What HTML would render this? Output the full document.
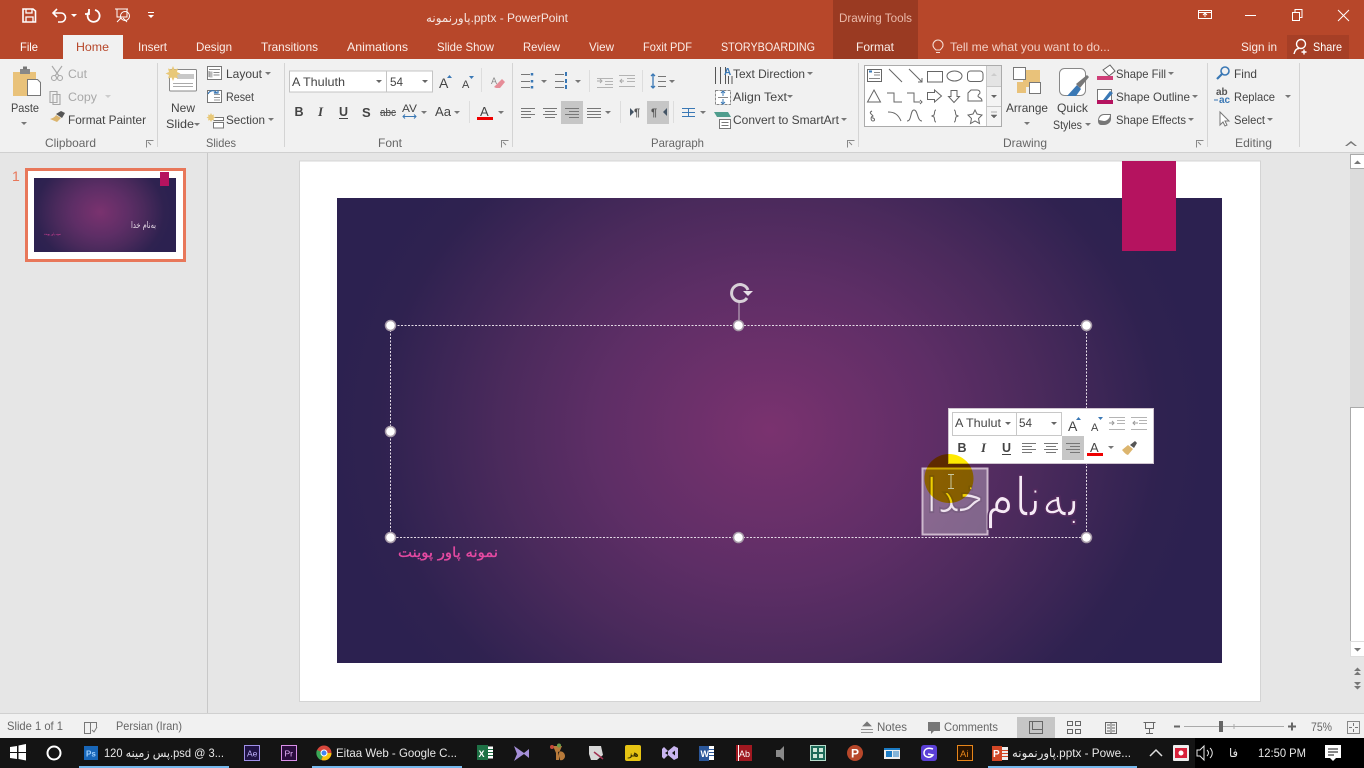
<!DOCTYPE html>
<html><head><meta charset="utf-8"><title>PowerPoint</title>
<style>
html,body{margin:0;padding:0;width:1364px;height:768px;overflow:hidden;background:#e6e6e6}
svg{display:block}
text{font-family:"Liberation Sans","DejaVu Sans",sans-serif;font-size:12px;fill:#444}
.w text,text.w{fill:#fff}
.d{fill:#a8a8a8}
.g{fill:#666}
.tb text{fill:#e8e8e8;font-size:12px}
.l{fill:none;stroke:#666;stroke-width:1}
.c{fill:#777}
</style></head><body>
<svg width="1364" height="768" viewBox="0 0 1364 768" xmlns="http://www.w3.org/2000/svg" lengthAdjust="spacingAndGlyphs">
<defs>
<radialGradient id="bg" gradientUnits="userSpaceOnUse" cx="0" cy="0" r="1" gradientTransform="translate(770 430) scale(440 380)">
<stop offset="0" stop-color="#7a326f"/><stop offset=".39" stop-color="#5e2e66"/><stop offset=".61" stop-color="#4b2a5c"/><stop offset=".89" stop-color="#2f2250"/><stop offset="1" stop-color="#2c2150"/></radialGradient>
<radialGradient id="bg2" gradientUnits="userSpaceOnUse" cx="0" cy="0" r="1" gradientTransform="translate(100 212) scale(72 62)">
<stop offset="0" stop-color="#7a326f"/><stop offset=".39" stop-color="#5e2e66"/><stop offset=".61" stop-color="#4b2a5c"/><stop offset=".89" stop-color="#2f2250"/><stop offset="1" stop-color="#2c2150"/></radialGradient>
<path id="car" d="M0 0h6l-3 3z"/>
</defs>

<!-- title bar -->
<rect width="1364" height="59" fill="#b7472a"/>
<rect x="833" width="85" height="59" fill="#9a3a22"/>
<rect x="63" y="35" width="60" height="24" fill="#f1f1f1"/>
<rect x="1287" y="35" width="62" height="24" fill="#a63f26"/>
<!-- QAT -->
<g fill="none" stroke="#fff" stroke-width="1.6">
<path d="M23 9h10l2.500 2v11H23z"/><path d="M26 9v4h6V9M26 22v-5h7v5" stroke-width="1.3"/>
<path d="M53 13h8a4.500 4.500 0 0 1 0 9h-3M57 9l-4 4 4 4"/>
<path d="M95 10a6 6 0 1 1-6 2M89 9v5h-4" stroke-width="1.800"/>
<path d="M115 9h13M117 9v8h10V9M121 18l-4 4M123 18l4 4" stroke-width="1"/><circle cx="125" cy="16" r="4.500" stroke-width="1"/>
</g>
<path d="M71 14h6l-3 3zM148 15h6l-3 3z" fill="#fff"/><rect x="148" y="12" width="6" height="1" fill="#fff"/>
<text x="426" y="22" class="w" textLength="142" lengthAdjust="spacingAndGlyphs" style="fill:#f5e5e0;font-family:'Liberation Sans','DejaVu Sans',sans-serif">پاورنمونه.pptx - PowerPoint</text>
<text x="839" y="22" textLength="73" lengthAdjust="spacingAndGlyphs" style="fill:#eab9a9;font-size:11.500px">Drawing Tools</text>
<!-- window controls -->
<g fill="none" stroke="#fff" stroke-width="1">
<path d="M1198.500 10.500h13v8h-13zM1198.500 12.500h13M1205 17v-3.500M1203 15l2-2 2 2"/>
<path d="M1245 15.500h11"/>
<path d="M1292.500 12.500h7v8h-7zM1295 12v-2.500h7v8h-2"/>
<path d="M1338 10l11 11M1349 10l-11 11"/>
</g>
<!-- tabs -->
<g style="fill:#fff">
<text x="20" y="51" textLength="18" lengthAdjust="spacingAndGlyphs" style="fill:#fff">File</text>
<text x="76" y="51" textLength="33" lengthAdjust="spacingAndGlyphs" style="fill:#b7472a">Home</text>
<text x="138" y="51" textLength="29" lengthAdjust="spacingAndGlyphs" style="fill:#fbeee9">Insert</text>
<text x="196" y="51" textLength="36" lengthAdjust="spacingAndGlyphs" style="fill:#fbeee9">Design</text>
<text x="261" y="51" textLength="57" lengthAdjust="spacingAndGlyphs" style="fill:#fbeee9">Transitions</text>
<text x="347" y="51" textLength="61" lengthAdjust="spacingAndGlyphs" style="fill:#fbeee9">Animations</text>
<text x="437" y="51" textLength="57" lengthAdjust="spacingAndGlyphs" style="fill:#fbeee9">Slide Show</text>
<text x="523" y="51" textLength="37" lengthAdjust="spacingAndGlyphs" style="fill:#fbeee9">Review</text>
<text x="589" y="51" textLength="25" lengthAdjust="spacingAndGlyphs" style="fill:#fbeee9">View</text>
<text x="643" y="51" textLength="49" lengthAdjust="spacingAndGlyphs" style="fill:#fbeee9">Foxit PDF</text>
<text x="721" y="51" textLength="94" lengthAdjust="spacingAndGlyphs" style="fill:#fbeee9">STORYBOARDING</text>
<text x="856" y="51" textLength="38" lengthAdjust="spacingAndGlyphs" style="fill:#fbeee9">Format</text>
<text x="950" y="51" textLength="160" lengthAdjust="spacingAndGlyphs" style="fill:#f2cfc4">Tell me what you want to do...</text>
<text x="1241" y="51" textLength="36" lengthAdjust="spacingAndGlyphs" style="fill:#fbeee9">Sign in</text>
<text x="1313" y="51" textLength="29" lengthAdjust="spacingAndGlyphs" style="fill:#fff">Share</text>
</g>
<g fill="none" stroke="#f6ddd4" stroke-width="1.100">
<path d="M936 50c-2-2-3-3-3-5a5 5 0 0 1 10 0c0 2-1 3-3 5zM936 52.500h4"/>
</g>
<g fill="none" stroke="#fff" stroke-width="1.400"><circle cx="1301" cy="44" r="4.500"/><path d="M1294 54c1-4 3-5.500 5-5.500M1304 49.500v5M1301.500 52h5"/></g>

<!-- ribbon -->
<rect y="59" width="1364" height="93" fill="#f1f1f1"/>
<rect y="152" width="1364" height="1" fill="#d0d0d0"/>
<path d="M157.500 63v84M284.500 63v84M512.500 63v84M858.500 63v84M1207.500 63v84M1299.500 63v84" stroke="#d4d4d4"/>
<!-- group labels -->
<g style="fill:#666">
<text x="45" y="147" textLength="51" lengthAdjust="spacingAndGlyphs" style="fill:#666">Clipboard</text>
<text x="206" y="147" textLength="30" lengthAdjust="spacingAndGlyphs" style="fill:#666">Slides</text>
<text x="378" y="147" textLength="24" lengthAdjust="spacingAndGlyphs" style="fill:#666">Font</text>
<text x="651" y="147" textLength="53" lengthAdjust="spacingAndGlyphs" style="fill:#666">Paragraph</text>
<text x="1003" y="147" textLength="44" lengthAdjust="spacingAndGlyphs" style="fill:#666">Drawing</text>
<text x="1235" y="147" textLength="37" lengthAdjust="spacingAndGlyphs" style="fill:#666">Editing</text>
</g>
<g fill="none" stroke="#888"><path d="M146.500 147.500v-7h7M151 145l-3-3M501.500 147.500v-7h7M506 145l-3-3M847.500 147.500v-7h7M852 145l-3-3M1196.500 147.500v-7h7M1201 145l-3-3"/></g>
<path d="M1345 146l6-5 6 5-2 0-4-3-4 3z" fill="#777"/>

<!-- clipboard -->
<rect x="13" y="72" width="23" height="24" fill="#e9c27a"/>
<rect x="20" y="69" width="10" height="5" fill="#888"/><rect x="23" y="66.500" width="4" height="3" fill="#777"/>
<path d="M27.500 79.500h10l3 3v13h-13z" fill="#fff" stroke="#777"/>
<text x="11" y="112" textLength="28" lengthAdjust="spacingAndGlyphs">Paste</text>
<use href="#car" x="21" y="122" fill="#777"/>
<g fill="none" stroke="#a8a8a8" stroke-width="1.100"><circle cx="54" cy="78" r="2.500"/><circle cx="60" cy="78" r="2.500"/><path d="M52 66l7 10M62 66l-7 10"/>
<path d="M50 91.500h7v11h-7zM53 94.500h7v10h-7z" /></g>
<text x="68" y="78" textLength="19" lengthAdjust="spacingAndGlyphs" class="d">Cut</text>
<text x="68" y="101" textLength="29" lengthAdjust="spacingAndGlyphs" class="d">Copy</text>
<use href="#car" x="105" y="95" fill="#ccc"/>
<text x="68" y="124" textLength="78" lengthAdjust="spacingAndGlyphs">Format Painter</text>
<path d="M50 119l7 3 4-4-5-3c-1 2-3 3-6 4z" fill="#dcb56e"/><path d="M56 114l6 4 3-5-4-2z" fill="#555"/>

<!-- slides -->
<rect x="169.500" y="69.500" width="27" height="21.500" fill="#fff" stroke="#888" rx="1"/>
<rect x="177" y="74" width="17" height="5" fill="#c8c8c8"/><path d="M173 83.500h20M173 86.500h20" stroke="#aaa"/>
<path d="M173 66l1.500 3.500 3.500-1-1 3.500 3.500 1.500-3.500 1.500 1 3.500-3.500-1-1.500 3.500-1.500-3.500-3.500 1 1-3.500-3.500-1.500 3.500-1.500-1-3.500 3.500 1z" fill="#e8c878"/>
<text x="171" y="112" textLength="24" lengthAdjust="spacingAndGlyphs">New</text>
<text x="166" y="128" textLength="28" lengthAdjust="spacingAndGlyphs">Slide</text>
<use href="#car" x="194" y="123" fill="#777"/>
<path d="M207.500 66.500h14v13h-14z" fill="#fff" stroke="#777"/><path d="M209 69.500h11M209 71v6M213.500 72.500h6M213.500 75h6" stroke="#888"/><rect x="209.500" y="71.500" width="3" height="6" fill="#bbb"/>
<text x="226" y="78" textLength="36" lengthAdjust="spacingAndGlyphs">Layout</text><use href="#car" x="265" y="72" fill="#777"/>
<path d="M207.500 90.500h14v12h-14z" fill="#fff" stroke="#777"/><path d="M214 94.500h6M214 97.500h6M214 100h6" stroke="#999"/><path d="M208 94c2-4 6-4 8-2l-2 1h4v-3" fill="none" stroke="#3a78b5" stroke-width="1.200"/>
<text x="226" y="101" textLength="28" lengthAdjust="spacingAndGlyphs">Reset</text>
<path d="M213.500 117.500h10v3h-10M213.500 122.500h10v5.500h-10z" fill="#fff" stroke="#777"/><path d="M211 113l1 2 2-.5-.5 2 2 1-2 1 .5 2-2-.5-1 2-1-2-2 .5.500-2-2-1 2-1-.5-2 2 .5z" fill="#e8c878"/>
<text x="226" y="124" textLength="39" lengthAdjust="spacingAndGlyphs">Section</text><use href="#car" x="268" y="118" fill="#777"/>

<!-- font -->
<rect x="289.500" y="71" width="97" height="21" fill="#fff" stroke="#c4c4c4"/>
<rect x="386.500" y="71" width="46" height="21" fill="#fff" stroke="#c4c4c4"/>
<text x="292" y="86" textLength="53" lengthAdjust="spacingAndGlyphs">A Thuluth</text>
<text x="390" y="86" textLength="13" lengthAdjust="spacingAndGlyphs">54</text>
<use href="#car" x="376" y="80" fill="#666"/><use href="#car" x="422" y="80" fill="#666"/>
<text x="439" y="88" style="font-size:14px">A</text><path d="M447 78l2.500-3 2.500 3z" fill="#3a78b5"/>
<text x="462" y="88" style="font-size:11px">A</text><path d="M469 76h5l-2.500 3z" fill="#3a78b5"/>
<path d="M481.500 68v24" stroke="#ddd"/>
<text x="491" y="84" style="font-size:9px;fill:#888">A</text><path d="M494 87l8-8 3 3-5 6-4 0z" fill="#e68d98"/>
<g style="font-size:13px">
<text x="294.500" y="116" style="font-weight:bold;font-size:12.500px">B</text>
<text x="318" y="116" style="font-style:italic;font-family:'Liberation Serif',serif;font-size:13px;font-weight:bold">I</text>
<text x="339" y="116" style="font-weight:bold;font-size:12.500px">U</text>
<rect x="339" y="118" width="9" height="1" fill="#444"/>
<text x="362" y="117" style="font-weight:bold;font-size:13px">S</text>
<text x="380" y="116" textLength="16" lengthAdjust="spacingAndGlyphs" style="font-size:11px">abc</text>
<path d="M380 112.500h16" stroke="#555"/>
<text x="402" y="112" textLength="15" lengthAdjust="spacingAndGlyphs" style="font-size:11px">AV</text>
<path d="M403 116.500h13M405 114.500l-2 2 2 2M414 114.500l2 2-2 2" fill="none" stroke="#3a78b5"/>
<use href="#car" x="421" y="111" fill="#777"/>
<text x="435" y="116" textLength="16" lengthAdjust="spacingAndGlyphs" style="font-size:13px">Aa</text>
<use href="#car" x="454" y="111" fill="#777"/>
<path d="M469.500 101v22" stroke="#ddd"/>
<text x="480" y="116" style="font-size:13px">A</text><rect x="477" y="117" width="16" height="3" fill="#e00"/>
<use href="#car" x="498" y="111" fill="#777"/>
</g>

<!-- paragraph -->
<g stroke="#777" fill="none">
<path d="M521 74.500h9M521 81.500h9M521 87.500h9"/><path d="M532 73v2.500M532 80v2.500M532 86v2.500" stroke="#3a78b5" stroke-width="2.500"/>
<path d="M555 74.500h9M555 81.500h9M555 87.500h9"/><path d="M566 72v4M566 79v4M566 85v4" stroke="#3a78b5" stroke-width="2"/>
<path d="M597 78.500h16M605 81.500h8M605 84.500h8M597 87.500h16" stroke="#b4b4b4"/>
<path d="M619 75.500h16M627 78.500h8M627 81.500h8M619 86.500h16" stroke="#b4b4b4"/>
<path d="M597 81l4 0M600 79l2 2-2 2M622 79l-2 2 2 2M620 81h4" stroke="#a8a8a8"/>
<path d="M658 76.500h8M658 81.500h8M658 86.500h8"/><path d="M653 74v14M651 76l2-2 2 2M651 86l2 2 2-2" stroke="#3a78b5" stroke-width="1.300"/>
</g>
<path d="M589.500 70v22M642.500 70v22" stroke="#ddd"/>
<use href="#car" x="541" y="80" fill="#777"/><use href="#car" x="575" y="80" fill="#777"/><use href="#car" x="669" y="80" fill="#777"/>
<rect x="561" y="101" width="22" height="23" fill="#c6c6c6"/>
<rect x="647" y="101" width="22" height="23" fill="#c6c6c6"/>
<path d="M620.500 101v22M673.500 101v22" stroke="#ddd"/>
<g stroke="#777" fill="none">
<path d="M521 108.500h14M521 111.500h10M521 114.500h14M521 117.500h10"/>
<path d="M543 108.500h14M545 111.500h10M543 114.500h14M545 117.500h10"/>
<path d="M565 108.500h14M569 111.500h10M565 114.500h14M569 117.500h10"/>
<path d="M587 108.500h14M587 111.500h14M587 114.500h14M587 117.500h14"/>
<path d="M682 108.500h13M682 112.500h13M682 116.500h13M688.500 108v9" stroke="#3a78b5"/>
</g>
<use href="#car" x="605" y="111" fill="#777"/><use href="#car" x="700" y="111" fill="#777"/>
<path d="M630 108v8l4-4z" fill="#456"/><text x="634" y="116" style="font-size:11px;font-weight:bold;fill:#555">¶</text>
<text x="651" y="116" style="font-size:11px;font-weight:bold;fill:#555">¶</text><path d="M667 108v8l-4-4z" fill="#456"/>

<path d="M715.500 67v17M720.500 67v17M725.500 67v17M728.500 76v8M732 76v8" stroke="#555"/>
<text x="724" y="75" style="font-size:10px;fill:#3a78b5;font-weight:bold">A</text>
<text x="733" y="78" textLength="72" lengthAdjust="spacingAndGlyphs">Text Direction</text><use href="#car" x="807" y="72" fill="#777"/>
<path d="M715.500 90.500h15v14h-15z" fill="#fff" stroke="#888" stroke-dasharray="3 1"/><path d="M723 91v5M721 93l2-2 2 2M723 104v-5M721 102l2 2 2-2" stroke="#3a78b5" fill="none"/><path d="M718 97.500h10" stroke="#888"/>
<text x="733" y="101" textLength="54" lengthAdjust="spacingAndGlyphs">Align Text</text><use href="#car" x="787" y="95" fill="#777"/>
<path d="M714 112h14l3 5h-14z" fill="#4f9d8d"/><rect x="719.500" y="119.500" width="11" height="9" fill="#fff" stroke="#777"/><path d="M721.500 122.500h7M721.500 125.500h7" stroke="#777"/>
<text x="733" y="124" textLength="106" lengthAdjust="spacingAndGlyphs">Convert to SmartArt</text><use href="#car" x="841" y="118" fill="#777"/>

<!-- shapes gallery -->
<rect x="864.500" y="65.500" width="137" height="61" fill="#fff" stroke="#ababab"/>
<rect x="987" y="66" width="14" height="60" fill="#f4f4f4"/>
<rect x="987" y="66" width="14" height="20" fill="#e4e4e4"/>
<path d="M986.500 66v60M987 86.500h14M987 106.500h14" stroke="#c8c8c8"/>
<path d="M991 76l3-3 3 3z" fill="#ccc"/><path d="M991 95h6l-3 3z" fill="#666"/><path d="M991 112h6M991 115h6l-3 3z" fill="#666" stroke="#666" stroke-width=".5"/>
<g fill="none" stroke="#666" stroke-width="1">
<rect x="867.500" y="69.500" width="14" height="12"/><path d="M874 72.500h6M874 75h6M869 78.500h11" stroke="#888"/>
<path d="M889 69l13 13M909 69l13 13M922 78v4h-4"/>
<rect x="927.500" y="71.500" width="15" height="10.500"/>
<ellipse cx="954.500" cy="76" rx="7.500" ry="5"/>
<rect x="967.500" y="71" width="15.500" height="10.500" rx="3"/>
<path d="M874 90l6.500 12h-13z"/>
<path d="M887 93h7v9h8M907 93h7v9h6M920 100l2 2-2 2"/>
<path d="M927.500 92.500h7v-2.500l7 6-7 6v-2.500h-7z"/>
<path d="M951 90.500h6v6h2.500l-5.500 6-5.500-6h2.500z"/>
<path d="M968 101v-8l3-3h6c3 0 3 2 3 3s-2 1-2 3 4 1 4 5z"/>
<path d="M872 111c-4 2 0 3 1 5-3 1-2 5 0 5 3 0 1-4-1-3"/>
<path d="M888 112c6 0 10 2 13 9"/>
<path d="M907 121c5 0 3-11 7-11s3 11 8 11"/>
<path d="M936 110c-2 0-1 3-2 5l-2 1 2 1c1 2 0 5 2 5"/>
<path d="M954 110c2 0 1 3 2 5l2 1-2 1c-1 2 0 5-2 5"/>
<path d="M975 110l2 4 5 1-3.500 3.500 1 5-4.500-2.500-4.500 2.500 1-5-3.500-3.500 5-1z"/>
</g>
<path d="M869 71.500h3" stroke="#3a78b5" stroke-width="2"/>

<!-- arrange & styles -->
<rect x="1023" y="70" width="17" height="17" fill="#e9c27a"/>
<rect x="1013.500" y="67.500" width="12" height="12" fill="#fff" stroke="#777"/>
<rect x="1029.500" y="82.500" width="11" height="11" fill="#fff" stroke="#777"/>
<rect x="1017" y="82" width="9" height="11" fill="#e9c27a"/>
<text x="1006" y="112" textLength="42" lengthAdjust="spacingAndGlyphs">Arrange</text><use href="#car" x="1024" y="122" fill="#777"/>
<rect x="1059.500" y="68.500" width="26" height="27" rx="5" fill="#fff" stroke="#888"/>
<path d="M1067 96l10-11 4 4-5 7z" fill="#3a78b5"/><path d="M1076 84l11-9 2 2-9 11z" fill="#777"/>
<text x="1057" y="112" textLength="31" lengthAdjust="spacingAndGlyphs">Quick</text>
<text x="1053" y="129" textLength="29" lengthAdjust="spacingAndGlyphs">Styles</text><use href="#car" x="1085" y="123" fill="#777"/>
<path d="M1103 70l7-5 5 6-6 5z" fill="#fff" stroke="#666"/><rect x="1097" y="76" width="16" height="4" fill="#cf3f78"/>
<rect x="1097.500" y="89.500" width="14" height="13" fill="#fff" stroke="#777"/><path d="M1103 100l7-9 3 2-7 8z" fill="#3a78b5"/><rect x="1097" y="100" width="16" height="4" fill="#b5135f"/>
<path d="M1098 121c0-5 3-7 6-7h7v5c0 3-3 6-7 6h-3c-2 0-3-2-3-4z" fill="#777"/><path d="M1099 120c0-3 3-5 5-5h6c0 3-3 6-6 6z" fill="#fff"/>
<text x="1116" y="78" textLength="50" lengthAdjust="spacingAndGlyphs">Shape Fill</text><use href="#car" x="1168" y="72" fill="#777"/>
<text x="1116" y="101" textLength="74" lengthAdjust="spacingAndGlyphs">Shape Outline</text><use href="#car" x="1192" y="95" fill="#777"/>
<text x="1116" y="124" textLength="70" lengthAdjust="spacingAndGlyphs">Shape Effects</text><use href="#car" x="1188" y="118" fill="#777"/>

<!-- editing -->
<circle cx="1225" cy="71" r="4" fill="none" stroke="#3a78b5" stroke-width="1.600"/><path d="M1222 74l-5 5" stroke="#3a78b5" stroke-width="2.200"/>
<text x="1234" y="78" textLength="23" lengthAdjust="spacingAndGlyphs">Find</text>
<text x="1216" y="95" style="font-size:10px;fill:#555;font-weight:bold">ab</text><text x="1219" y="103" style="font-size:10px;fill:#3a78b5;font-weight:bold">ac</text><path d="M1214 100h4" stroke="#3a78b5"/>
<text x="1234" y="101" textLength="41" lengthAdjust="spacingAndGlyphs">Replace</text><use href="#car" x="1285" y="95" fill="#777"/>
<path d="M1220 112v13l3-3 2 4 2-1-2-4h4z" fill="#fff" stroke="#777"/>
<text x="1234" y="124" textLength="31" lengthAdjust="spacingAndGlyphs">Select</text><use href="#car" x="1267" y="118" fill="#777"/>

<!-- panes -->
<rect y="153" width="1364" height="563" fill="#e6e6e6"/>
<rect x="207" y="153" width="1" height="561" fill="#c8c8c8"/>
<rect y="713" width="1364" height="1" fill="#d0d0d0"/>
<rect x="1350" y="153" width="14" height="538" fill="#dcdcdc"/>
<rect x="1350.500" y="154.500" width="14" height="14" fill="#fff" stroke="#aaa"/>
<path d="M1354 164l3.500-3.500 3.500 3.500z" fill="#777"/>
<rect x="1350.500" y="407.500" width="14" height="234" fill="#fff" stroke="#aaa"/>
<rect x="1350.500" y="641.500" width="14" height="15" fill="#fff" stroke="#ddd"/>
<path d="M1354 648h7l-3.500 3.500z" fill="#777"/>
<rect x="1350" y="657" width="14" height="34" fill="#e6e6e6"/>
<path d="M1354 671l3.500-3.500 3.500 3.500zM1354 675l3.500-3.500 3.500 3.500zM1354 682h7l-3.500 3.500zM1354 686h7l-3.500 3.500z" fill="#777"/>

<!-- thumbnail -->
<text x="12" y="181" style="font-size:14px;fill:#e8775a">1</text>
<rect x="26.500" y="169.500" width="158" height="91" fill="#fff" stroke="#e8775a" stroke-width="3"/>
<rect x="34" y="178" width="142" height="74" fill="url(#bg2)"/>
<rect x="160" y="172" width="9" height="14" fill="#b5135f"/>
<text x="131" y="228" textLength="25" lengthAdjust="spacingAndGlyphs" style="font-size:9px;fill:#e8dce8;font-family:'DejaVu Sans',sans-serif">به‌نام خدا</text>
<text x="44" y="235" textLength="17" lengthAdjust="spacingAndGlyphs" style="font-size:3px;fill:#e0429b;font-family:'DejaVu Sans',sans-serif">نمونه پاور پوینت</text>

<!-- slide -->
<rect x="299.500" y="161" width="961" height="540.500" fill="#fff" stroke="#d4d4d4"/>
<rect x="337" y="198" width="885" height="465" fill="url(#bg)"/>
<rect x="1122" y="161" width="54" height="90" fill="#b5135f"/>
<text x="398" y="557" textLength="100" lengthAdjust="spacingAndGlyphs" style="font-size:14px;fill:#e64aa2;stroke:#e64aa2;stroke-width:.35;font-family:'DejaVu Sans',sans-serif">نمونه پاور پوینت</text>

<!-- selection -->
<rect x="390.500" y="325.500" width="696" height="212" fill="none" stroke="#e4dbe6" stroke-dasharray="2 1.500"/>
<rect x="922.500" y="468.500" width="65" height="66" fill="#fff" fill-opacity=".28" stroke="#cdb8cd" stroke-width="2"/>
<g transform="translate(985 516) scale(1 1.5)">
<text x="0" y="0" textLength="95" lengthAdjust="spacingAndGlyphs" style="font-size:36px;fill:#f6eaf6;stroke:#532b5e;stroke-width:1.200;font-family:'DejaVu Sans',sans-serif">به‌نام</text>
</g>
<g transform="translate(926 512) scale(1 1.4)">
<text x="0" y="0" textLength="58" lengthAdjust="spacingAndGlyphs" style="font-size:34px;fill:#efe4ef;stroke:#7a5f82;stroke-width:1.300;font-family:'DejaVu Sans',sans-serif">خدا</text>
</g>
<path d="M739 302v20" stroke="#c9bcc9"/>
<g fill="#fff" stroke="#a79aa8" stroke-width="1.500">
<circle cx="390.500" cy="325.500" r="5"/><circle cx="738.500" cy="325.500" r="5"/><circle cx="1086.500" cy="325.500" r="5"/>
<circle cx="390.500" cy="431.500" r="5"/>
<circle cx="390.500" cy="537.500" r="5"/><circle cx="738.500" cy="537.500" r="5"/><circle cx="1086.500" cy="537.500" r="5"/>
</g>
<path d="M748 290a8.500 8.500 0 1 0-1 8" fill="none" stroke="#d8d0d8" stroke-width="3"/>
<path d="M743 291h10l-5 5z" fill="#e8e0e8"/>

<!-- floating toolbar -->
<rect x="948.500" y="408.500" width="205" height="55" fill="#fff" stroke="#cfc4cf"/>
<rect x="952.500" y="412.500" width="64" height="23" fill="#fff" stroke="#c8c8c8"/>
<rect x="1016.500" y="412.500" width="45" height="23" fill="#fff" stroke="#c8c8c8"/>
<text x="955" y="427" textLength="46" lengthAdjust="spacingAndGlyphs">A Thulut</text>
<text x="1019" y="427" textLength="13" lengthAdjust="spacingAndGlyphs">54</text>
<use href="#car" x="1005" y="422" fill="#666"/><use href="#car" x="1051" y="422" fill="#666"/>
<text x="1068" y="431" style="font-size:14px">A</text><path d="M1076 420l2.500-3 2.500 3z" fill="#3a78b5"/>
<text x="1091" y="431" style="font-size:11px">A</text><path d="M1098 417h5l-2.500 3z" fill="#3a78b5"/>
<path d="M1109 417.500h16M1117 420.500h8M1117 423.500h8M1109 429.500h16M1131 417.500h16M1139 420.500h8M1139 423.500h8M1131 429.500h16" stroke="#b4b4b4"/>
<path d="M1109 423h5M1112 421l2 2-2 2M1135 421l-2 2 2 2M1133 423h5" stroke="#999" fill="none"/>
<rect x="1062" y="436" width="22" height="24" fill="#c6c6c6"/>
<text x="957.500" y="452" style="font-weight:bold;font-size:12.500px">B</text>
<text x="981" y="452" style="font-style:italic;font-family:'Liberation Serif',serif;font-size:13px;font-weight:bold">I</text>
<text x="1002" y="452" style="font-weight:bold;font-size:12.500px">U</text><rect x="1002" y="454" width="9" height="1" fill="#444"/>
<path d="M1022 443.500h14M1022 446.500h10M1022 449.500h14M1022 452.500h10M1044 443.500h14M1046 446.500h10M1044 449.500h14M1046 452.500h10M1066 443.500h14M1070 446.500h10M1066 449.500h14M1070 452.500h10" stroke="#777" fill="none"/>
<text x="1090" y="452" style="font-size:13px">A</text><rect x="1087" y="453" width="16" height="3" fill="#e00"/>
<use href="#car" x="1108" y="446" fill="#777"/>
<path d="M1122 450l6-5 5 4-5 6c-3-1-4-3-6-5z" fill="#dcb56e"/><path d="M1130 445l5-4 2 2-3 5z" fill="#555"/>

<!-- cursor highlight -->
<circle cx="949" cy="478.500" r="24.500" fill="#ffe900" style="mix-blend-mode:multiply"/>
<path d="M948 474.500h6M948 488.500h6M951 475v13" stroke="#c8c8a0"/>

<!-- status bar -->
<rect y="714" width="1364" height="24" fill="#f1f1f1"/>
<rect x="1017" y="717" width="38" height="21" fill="#c6c6c6"/>
<text x="7" y="730" textLength="56" lengthAdjust="spacingAndGlyphs" class="g">Slide 1 of 1</text>
<path d="M84.500 722.500h6v11h-6zM90.500 722.500h6v5M92 730l2 2 3-5" fill="none" stroke="#777"/>
<text x="116" y="730" textLength="66" lengthAdjust="spacingAndGlyphs" class="g">Persian (Iran)</text>
<path d="M861 729.500h12M861 732.500h12M863 726l4-4 4 4z" fill="#777" stroke="#777" stroke-width=".8"/>
<text x="877" y="731" textLength="30" lengthAdjust="spacingAndGlyphs" class="g">Notes</text>
<path d="M928 722h12v9h-6l-3 3v-3h-3z" fill="#777"/>
<text x="944" y="731" textLength="54" lengthAdjust="spacingAndGlyphs" class="g">Comments</text>
<g fill="none" stroke="#666">
<path d="M1029.500 721.500h13v12h-13zM1032.500 721.500v8h10"/>
<path d="M1067.500 721.500h5v4h-5zM1075.500 721.500h5v4h-5zM1067.500 729.500h5v4h-5zM1075.500 729.500h5v4h-5z"/>
<path d="M1105.500 722.500h11v11h-11zM1111 722v11M1107 725h3M1107 728h3M1107 731h3M1112 725h3M1112 728h3M1112 731h3"/>
<path d="M1143.500 722.500h12M1145.500 722.500v6h8v-6M1149.500 729v4M1146 733.500h7"/>
</g>
<path d="M1174 726.500h6" stroke="#666" stroke-width="2"/>
<path d="M1184 726.500h100" stroke="#aaa"/><path d="M1234 724v5" stroke="#aaa"/>
<rect x="1219" y="721" width="4" height="11" fill="#666"/>
<path d="M1288 726.500h8M1292 722.500v8" stroke="#666" stroke-width="2"/>
<text x="1311" y="731" textLength="21" lengthAdjust="spacingAndGlyphs" class="g">75%</text>
<path d="M1347.500 721.500h12v12h-12z" fill="none" stroke="#888"/><path d="M1353.500 723v3M1353.500 729v3M1349 727.500h3M1355 727.500h3" stroke="#777"/>

<!-- taskbar -->
<rect y="738" width="1364" height="30" fill="#141414"/>
<rect x="1195" y="738" width="169" height="30" fill="#000"/>
<g class="tb">
<path d="M10 747l7-1v6h-7zM18.500 745.500l7.500-1.500v8h-7.500zM10 753h7v6l-7-1zM18.500 753h7.500v7.500l-7.500-1.500z" fill="#fff"/>
<circle cx="54" cy="753" r="6.500" fill="none" stroke="#fff" stroke-width="2"/>

<rect x="84" y="746" width="14" height="14" fill="#1866b8"/><text x="86" y="756.500" style="font-size:8px;fill:#9fd0ff;font-weight:bold">Ps</text>
<text x="104" y="757" textLength="120" lengthAdjust="spacingAndGlyphs">پس زمینه 120.psd @ 3...</text>
<rect x="79" y="766" width="150" height="2" fill="#76b9ed"/>
<rect x="244.500" y="745.500" width="15" height="15" fill="#1f1245" stroke="#9f8fe8"/><text x="247" y="756.500" style="font-size:8.500px;fill:#c3b6ff">Ae</text>
<rect x="281.500" y="745.500" width="15" height="15" fill="#2a0d3d" stroke="#d98fe8"/><text x="284.500" y="756.500" style="font-size:8.500px;fill:#e9b6ff">Pr</text>

<circle cx="324" cy="753" r="7.500" fill="#d8473c"/><path d="M324 753l7.500 0a7.500 7.500 0 0 1-10 7z" fill="#f4c20d"/><path d="M324 753l-3 7a7.500 7.500 0 0 1-4-10z" fill="#3aa757"/><circle cx="324" cy="753" r="3" fill="#4285f4" stroke="#fff"/>
<text x="336" y="757" textLength="121" lengthAdjust="spacingAndGlyphs">Eitaa Web - Google C...</text>
<rect x="312" y="766" width="150" height="2" fill="#76b9ed"/>

<rect x="477" y="745" width="11" height="15" fill="#1e7145"/><text x="478.500" y="757" style="font-size:9px;fill:#fff;font-weight:bold">X</text><path d="M488 746.500h5v12h-5z" fill="#fff"/><path d="M488 749.500h5M488 752.500h5M488 755.500h5" stroke="#1e7145"/>
<path d="M514 746l10 7 5-4v9l-5-4-10 7 3-7z" fill="#a58fd8"/>
<path d="M553 746l3 7v7h3v-7l3-7zM558 752c4-2 7 1 7 4s-3 5-5 4z" fill="#b77a3a"/><circle cx="552" cy="747" r="2" fill="#c54a3a"/><circle cx="559" cy="745.500" r="2" fill="#6a9a4a"/>
<path d="M589 746h12l2 9-6 5h-6l-2-6z" fill="#d8d8d8"/><path d="M594 752l9 7" stroke="#a03050" stroke-width="1.500"/>
<rect x="625" y="745" width="16" height="16" rx="2" fill="#e6c413"/><text x="628" y="756.500" style="font-size:8px;fill:#3a3200;font-weight:bold">هز</text>
<path d="M662 749l2-2 4 4 6-5 4 2v10l-4 2-6-5-4 4-2-2zM665 753l3 2v-4zM672 753l3 2.500v-5z" fill="#c9b5f0" fill-rule="evenodd"/>
<rect x="699" y="746" width="10" height="15" fill="#2b579a"/><text x="700.500" y="757" style="font-size:9px;fill:#fff;font-weight:bold">W</text><rect x="709" y="746" width="5" height="14" fill="#fff"/><path d="M709 749.500h5M709 752.500h5M709 755.500h5" stroke="#2b579a"/>
<rect x="736" y="745" width="16" height="16" fill="#a01820"/><text x="739" y="757" style="font-size:9px;fill:#fff">Ab</text><path d="M738.500 745v16" stroke="#fff"/>
<path d="M776 750h4l4-4v15l-4-4h-4z" fill="#8a8a8a"/>
<rect x="810.500" y="745.500" width="15" height="15" fill="#1d6a58" stroke="#b8dccc"/><path d="M813 748h4v4h-4zM819 748h4v4h-4zM813 754h4v4h-4zM819 754h4v4h-4z" fill="#cfe8da"/>
<circle cx="855" cy="753" r="8" fill="#b7472a"/><text x="851" y="757.500" style="font-size:12px;fill:#fff;font-weight:bold">P</text>
<rect x="884" y="748" width="16" height="11" fill="#eee"/><rect x="884" y="748" width="16" height="2" fill="#1b7bc4"/><rect x="886" y="751" width="6" height="6" fill="#1b7bc4"/><path d="M893 752h6M893 754h6M893 756h6" stroke="#1b7bc4"/>
<rect x="921" y="745" width="16" height="16" rx="3" fill="#5b3fd6"/><path d="M933 749c-5-2-9 0-9 4s6 6 9 2l-5-1" fill="none" stroke="#fff" stroke-width="1.500"/>
<rect x="957.500" y="745.500" width="15" height="15" fill="#2a1400" stroke="#e8861a"/><text x="960" y="757" style="font-size:9.500px;fill:#e8861a">Ai</text>

<rect x="992" y="746" width="10" height="15" fill="#d24726"/><text x="993" y="757" style="font-size:10px;fill:#fff;font-weight:bold">P</text><rect x="1002" y="747" width="6" height="13" fill="#eee"/><path d="M1002 750.500h6M1002 753.500h6M1002 756.500h6" stroke="#d24726"/>
<text x="1012" y="757" textLength="119" lengthAdjust="spacingAndGlyphs">پاورنمونه.pptx - Powe...</text>
<rect x="988" y="766" width="149" height="2" fill="#76b9ed"/>

<path d="M1150 756l6-6 6 6" fill="none" stroke="#ddd" stroke-width="1.500"/>
<rect x="1173" y="745" width="16" height="16" rx="1" fill="#eee"/><rect x="1175" y="748" width="12" height="10" fill="#d8213a"/><circle cx="1181" cy="753" r="2.500" fill="#fff"/>
<path d="M1197 750h3l4-4v14l-4-4h-3zM1207 750c2 2 2 4 0 6M1210 748c3 3 3 7 0 10" fill="none" stroke="#e8e8e8"/>
<text x="1229" y="757" textLength="9" lengthAdjust="spacingAndGlyphs" style="font-family:'DejaVu Sans',sans-serif">فا</text>
<text x="1258" y="757" textLength="48" lengthAdjust="spacingAndGlyphs">12:50 PM</text>
<path d="M1325 745h16v13h-5l-3 3-3-3h-5z" fill="#fff"/><path d="M1328 749h10M1328 752h10M1328 755h6" stroke="#111"/>
</g>
</svg>
</body></html>
